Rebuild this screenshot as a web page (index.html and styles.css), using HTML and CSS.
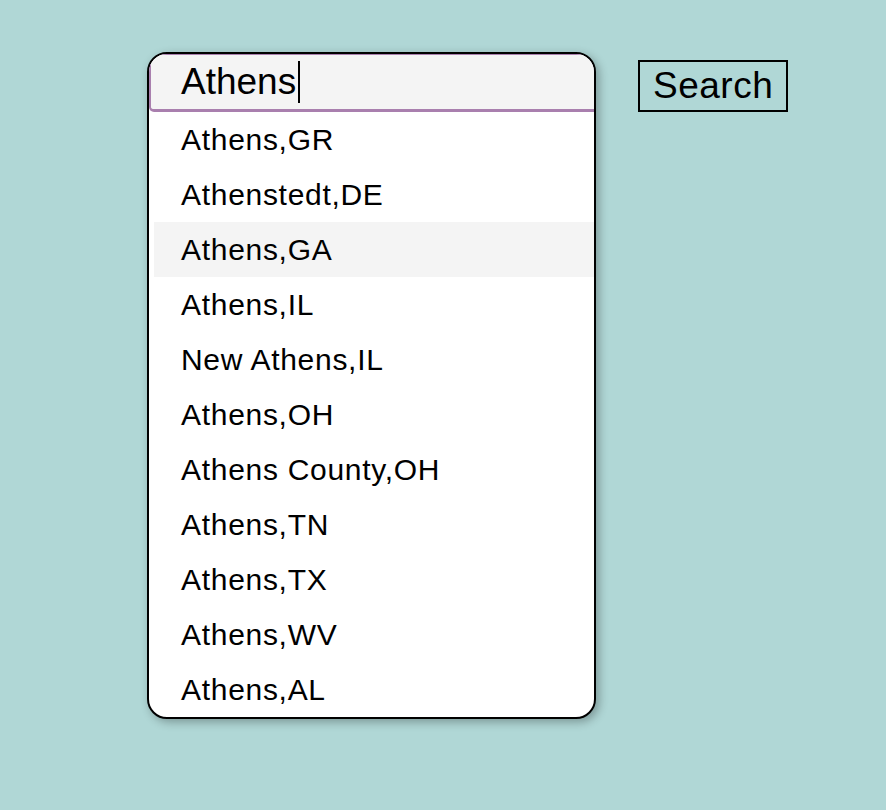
FILE: index.html
```html
<!DOCTYPE html>
<html>
<head>
<meta charset="utf-8">
<link rel="stylesheet" href="styles.css">
</head>
<body>
<div class="page">
  <div class="box">
    <div class="field"><span class="val">Athens</span><span class="caret"></span></div>
    <ul class="list">
      <li>Athens,GR</li>
      <li>Athenstedt,DE</li>
      <li class="active">Athens,GA</li>
      <li>Athens,IL</li>
      <li>New Athens,IL</li>
      <li>Athens,OH</li>
      <li>Athens County,OH</li>
      <li>Athens,TN</li>
      <li>Athens,TX</li>
      <li>Athens,WV</li>
      <li>Athens,AL</li>
    </ul>
  </div>
  <button class="search">Search</button>
</div>
</body>
</html>
```
FILE: styles.css
```css
html, body {
  margin: 0;
  padding: 0;
  background: #b0d7d6;
  height: 100%;
}
body {
  font-family: "Liberation Sans", Arial, sans-serif;
  color: #000;
}
.page {
  display: flex;
  align-items: flex-start;
  padding: 52px 0 0 147px;
  gap: 42px;
}
.box {
  width: 445px;
  border: 2px solid #000;
  border-radius: 20px;
  background: #fff;
  overflow: hidden;
  box-shadow: 3px 3px 10px rgba(0, 0, 0, 0.3);
}
.field {
  display: flex;
  align-items: center;
  height: 54px;
  padding-left: 30px;
  background: #f4f4f4;
  border-top: 1px solid #a97fae;
  border-left: 2px solid #a97fae;
  border-bottom: 3px solid #a97fae;
  border-bottom-left-radius: 5px;
  font-size: 37px;
}
.caret {
  display: inline-block;
  width: 2px;
  height: 42px;
  background: #000;
  margin-left: 2px;
}
.list {
  list-style: none;
  margin: 0 0 0 5px;
  padding: 0;
}
.list li {
  height: 55px;
  line-height: 55px;
  padding-left: 27px;
  font-size: 30px;
  letter-spacing: 0.7px;
}
.list li.active {
  background: #f4f4f4;
}
.search {
  margin-top: 8px;
  font-family: "Liberation Sans", Arial, sans-serif;
  font-size: 37px;
  letter-spacing: 0.5px;
  background: transparent;
  border: 2px solid #000;
  padding: 0 13px;
  height: 52px;
  line-height: 48px;
  color: #000;
}
```
